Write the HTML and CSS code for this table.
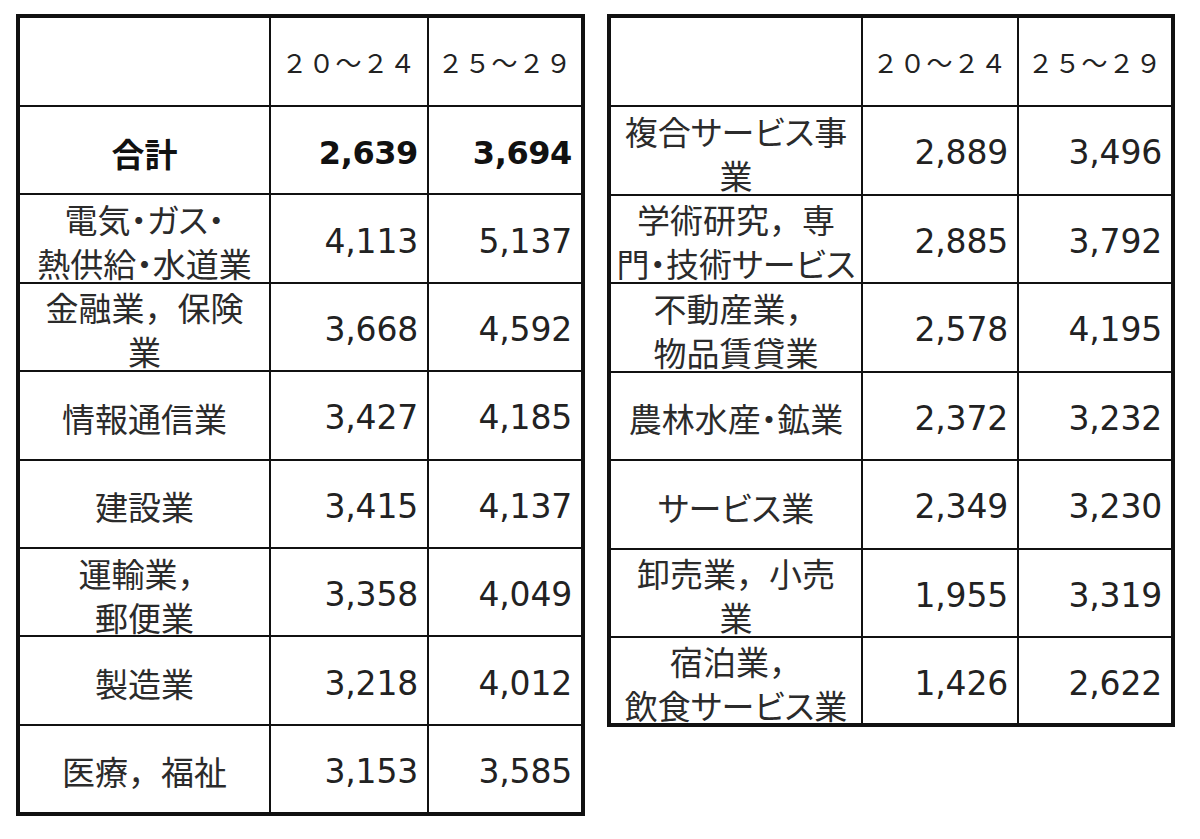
FILE: index.html
```html
<!DOCTYPE html>
<html lang="ja">
<head>
<meta charset="utf-8">
<title>年齢別 業種別</title>
<link rel="stylesheet" href="styles.css">
</head>
<body>
<div class="page">
  <div class="tbl tbl-left">
    <div class="c lab"></div>
    <div class="c hd">２０～２４</div>
    <div class="c hd">２５～２９</div>

    <div class="c lab bold"><span class="t">合計</span></div>
    <div class="c num bold">2,639</div>
    <div class="c num bold">3,694</div>

    <div class="c lab"><span class="t">電気・ガス・<br>熱供給・水道業</span></div>
    <div class="c num">4,113</div>
    <div class="c num">5,137</div>

    <div class="c lab"><span class="t">金融業<span class="fw">，</span>保険<br>業</span></div>
    <div class="c num">3,668</div>
    <div class="c num">4,592</div>

    <div class="c lab"><span class="t">情報通信業</span></div>
    <div class="c num">3,427</div>
    <div class="c num">4,185</div>

    <div class="c lab"><span class="t">建設業</span></div>
    <div class="c num">3,415</div>
    <div class="c num">4,137</div>

    <div class="c lab"><span class="t">運輸業<span class="fw">，</span><br>郵便業</span></div>
    <div class="c num">3,358</div>
    <div class="c num">4,049</div>

    <div class="c lab"><span class="t">製造業</span></div>
    <div class="c num">3,218</div>
    <div class="c num">4,012</div>

    <div class="c lab"><span class="t">医療<span class="fw">，</span>福祉</span></div>
    <div class="c num">3,153</div>
    <div class="c num">3,585</div>
  </div>

  <div class="tbl tbl-right">
    <div class="c lab"></div>
    <div class="c hd">２０～２４</div>
    <div class="c hd">２５～２９</div>

    <div class="c lab"><span class="t">複合サービス事<br>業</span></div>
    <div class="c num">2,889</div>
    <div class="c num">3,496</div>

    <div class="c lab"><span class="t">学術研究<span class="fw">，</span>専<br>門・技術サービス</span></div>
    <div class="c num">2,885</div>
    <div class="c num">3,792</div>

    <div class="c lab"><span class="t">不動産業<span class="fw">，</span><br>物品賃貸業</span></div>
    <div class="c num">2,578</div>
    <div class="c num">4,195</div>

    <div class="c lab"><span class="t">農林水産・鉱業</span></div>
    <div class="c num">2,372</div>
    <div class="c num">3,232</div>

    <div class="c lab"><span class="t">サービス業</span></div>
    <div class="c num">2,349</div>
    <div class="c num">3,230</div>

    <div class="c lab"><span class="t">卸売業<span class="fw">，</span>小売<br>業</span></div>
    <div class="c num">1,955</div>
    <div class="c num">3,319</div>

    <div class="c lab"><span class="t">宿泊業<span class="fw">，</span><br>飲食サービス業</span></div>
    <div class="c num">1,426</div>
    <div class="c num">2,622</div>
  </div>
</div>
</body>
</html>
```

FILE: styles.css
```css
html, body {
  margin: 0;
  padding: 0;
  background: #ffffff;
}

.page {
  display: flex;
  align-items: flex-start;
  gap: 22px;
  padding: 14px 0 0 16px;
}

.tbl {
  display: grid;
  border: 4px solid #111111;
  background: #ffffff;
}

.tbl-left {
  grid-template-columns: 251px 158px 152px;
  grid-template-rows: 89px repeat(7, 88.4px) 86px;
}

.tbl-right {
  grid-template-columns: 252px 156px 152px;
  grid-template-rows: 89px repeat(6, 88.5px) 85px;
}

.c {
  box-sizing: border-box;
  display: flex;
  align-items: center;
  overflow: hidden;
  border-right: 2px solid #111111;
  border-bottom: 2px solid #111111;
  color: #2b2b2b;
}

.c:nth-child(3n) {
  border-right: none;
}

.tbl-left .c:nth-last-child(-n+3),
.tbl-right .c:nth-last-child(-n+3) {
  border-bottom: none;
}

.lab {
  justify-content: center;
  text-align: center;
  white-space: nowrap;
  font-family: "Noto Sans CJK JP", "Noto Sans", sans-serif;
  font-size: 33px;
  line-height: 44px;
}

.t {
  display: block;
  font-feature-settings: "palt";
  padding-top: 5px;
}

.fw {
  font-feature-settings: normal;
}

.num {
  justify-content: flex-end;
  padding-top: 5px;
  padding-right: 9px;
  font-family: "DejaVu Sans", "Liberation Sans", sans-serif;
  font-size: 33px;
  letter-spacing: -0.2px;
  color: #222222;
}

.num.bold {
  font-size: 32px;
  letter-spacing: -0.4px;
}

.hd {
  justify-content: center;
  font-family: "Noto Sans CJK JP", sans-serif;
  font-size: 26px;
  font-weight: 400;
  color: #222222;
  letter-spacing: 1px;
}

.bold {
  font-weight: 700;
  color: #111111;
}
```
